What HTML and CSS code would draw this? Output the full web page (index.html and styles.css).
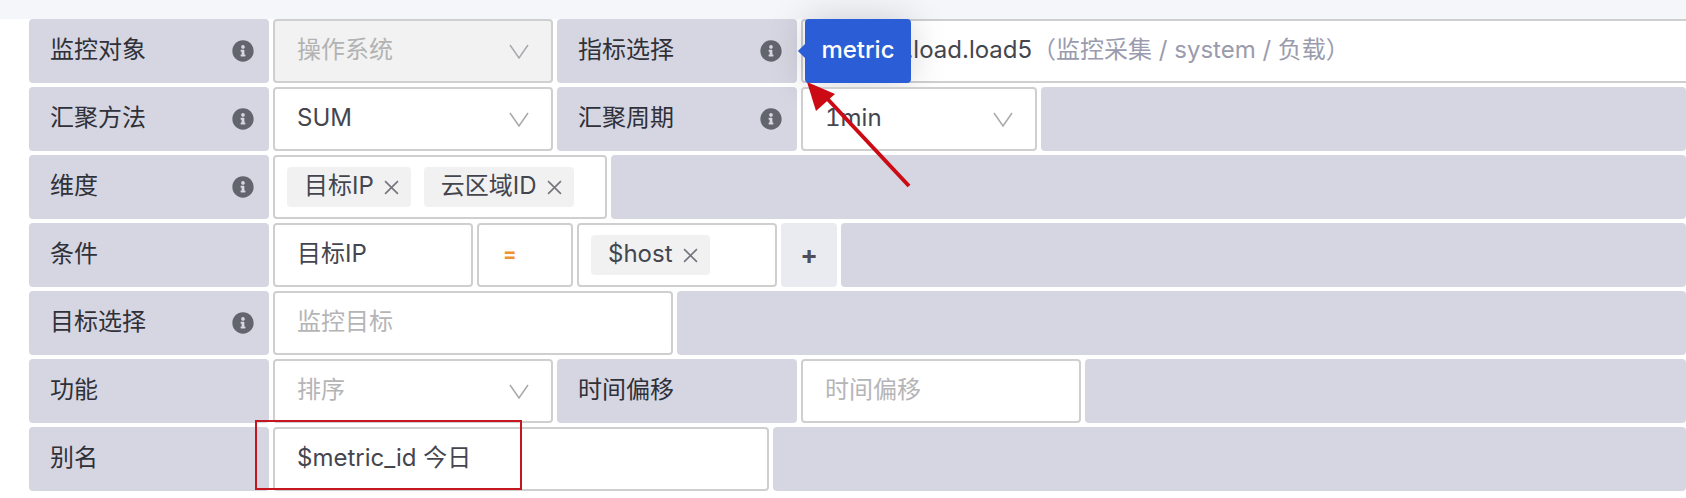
FILE: index.html
```html
<!DOCTYPE html>
<html lang="zh-CN">
<head>
<meta charset="utf-8">
<title>指标配置</title>
<link rel="stylesheet" href="styles.css">
</head>
<body>
<svg class="defs" width="0" height="0" aria-hidden="true">
  <symbol id="info" viewBox="0 0 512 512"><path d="M256 8C119.043 8 8 119.083 8 256c0 136.997 111.043 248 248 248s248-111.003 248-248C504 119.083 392.957 8 256 8zm0 110c23.196 0 42 18.804 42 42s-18.804 42-42 42-42-18.804-42-42 18.804-42 42-42zm56 254c0 6.627-5.373 12-12 12h-88c-6.627 0-12-5.373-12-12v-24c0-6.627 5.373-12 12-12h12v-64h-12c-6.627 0-12-5.373-12-12v-24c0-6.627 5.373-12 12-12h64c6.627 0 12 5.373 12 12v100h12c6.627 0 12 5.373 12 12v24z"/></symbol>
  <symbol id="chev" viewBox="0 0 20 15"><path d="M1 1l9 13 9-13" fill="none" stroke="currentColor" stroke-width="1.5"/></symbol>
  <symbol id="x" viewBox="0 0 14 14"><path d="M1 1l12 12M13 1L1 13" fill="none" stroke="currentColor" stroke-width="1.5"/></symbol>
</svg>
<div class="band"></div>
<main class="form">
  <div class="row">
    <div class="label"><span>监控对象</span><svg class="info"><use href="#info"/></svg></div>
    <div class="field select disabled w-280"><span>操作系统</span><svg class="chev"><use href="#chev"/></svg></div>
    <div class="label"><span>指标选择</span><svg class="info"><use href="#info"/></svg></div>
    <div class="field metric grow">
      <span class="metric-text">system.load.load5<span class="muted">（监控采集 / system / 负载）</span></span>
      <div class="tooltip">metric</div>
    </div>
  </div>
  <div class="row">
    <div class="label"><span>汇聚方法</span><svg class="info"><use href="#info"/></svg></div>
    <div class="field select w-280"><span>SUM</span><svg class="chev"><use href="#chev"/></svg></div>
    <div class="label"><span>汇聚周期</span><svg class="info"><use href="#info"/></svg></div>
    <div class="field select w-236"><span class="tabular">1min</span><svg class="chev"><use href="#chev"/></svg></div>
    <div class="filler"></div>
  </div>
  <div class="row">
    <div class="label"><span>维度</span><svg class="info"><use href="#info"/></svg></div>
    <div class="field tags w-334">
      <span class="tag"><span>目标IP</span><svg class="close"><use href="#x"/></svg></span>
      <span class="tag"><span>云区域ID</span><svg class="close"><use href="#x"/></svg></span>
    </div>
    <div class="filler"></div>
  </div>
  <div class="row">
    <div class="label"><span>条件</span></div>
    <div class="field w-200"><span>目标IP</span></div>
    <div class="field op w-96"><span>=</span></div>
    <div class="field tags w-200"><span class="tag"><span>$host</span><svg class="close"><use href="#x"/></svg></span></div>
    <div class="add">+</div>
    <div class="filler"></div>
  </div>
  <div class="row">
    <div class="label"><span>目标选择</span><svg class="info"><use href="#info"/></svg></div>
    <div class="field placeholder w-400"><span>监控目标</span></div>
    <div class="filler"></div>
  </div>
  <div class="row">
    <div class="label"><span>功能</span></div>
    <div class="field select placeholder w-280"><span>排序</span><svg class="chev"><use href="#chev"/></svg></div>
    <div class="label"><span>时间偏移</span></div>
    <div class="field placeholder w-280"><span>时间偏移</span></div>
    <div class="filler"></div>
  </div>
  <div class="row">
    <div class="label"><span>别名</span></div>
    <div class="field w-496"><span>$metric_id 今日</span></div>
    <div class="filler"></div>
  </div>
</main>
<svg class="pointer" viewBox="0 0 120 120" aria-hidden="true">
  <path class="pointer-line" d="M104 104L16 10"/>
  <path class="pointer-head" d="M2 0L30 12L11 29Z"/>
</svg>
<div class="callout"></div>
</body>
</html>
```

FILE: styles.css
```css
* { box-sizing: border-box; }
html, body { margin: 0; height: 100%; }
body {
  position: relative;
  overflow: hidden;
  background: #fff;
  color: #44464f;
  font-family: Inter, "Noto Sans CJK SC", sans-serif;
  font-size: 24px;
  line-height: 32px;
}
.defs { position: absolute; }
.band { height: 19px; background: #f5f6fa; }
.form {
  display: flex;
  flex-direction: column;
  gap: 4px;
  padding-left: 29px;
}
.row { display: flex; gap: 4px; height: 64px; }
.label {
  flex: 0 0 240px;
  display: flex;
  align-items: center;
  justify-content: space-between;
  padding: 0 15px 0 21px;
  border-radius: 4px;
  background: #d5d6e1;
  color: #2f3038;
}
.label > span, .field > span, .tag > span { margin-top: -2px; }
.info { width: 22px; height: 22px; fill: #63656e; }
.field {
  position: relative;
  flex: none;
  display: flex;
  align-items: center;
  padding: 0 22px;
  border: 2px solid #cfcfcf;
  border-radius: 4px;
  background: #fff;
}
.grow { flex: 1; margin-right: -10px; }
.w-96 { width: 96px; }
.w-200 { width: 200px; }
.w-236 { width: 236px; }
.w-280 { width: 280px; }
.w-334 { width: 334px; }
.w-400 { width: 400px; }
.w-496 { width: 496px; }
.select { justify-content: space-between; }
.tabular { font-variant-numeric: tabular-nums; }
.chev { width: 20px; height: 15px; color: #a9a9ad; }
.disabled { background: #f2f2f2; color: #b3b3b3; }
.placeholder { color: #b5b5b8; }
.tags { gap: 13px; padding: 0 12px; }
.field > .tag { margin-top: 0; }
.tag {
  display: flex;
  align-items: center;
  gap: 10px;
  height: 40px;
  padding: 0 12px 0 17px;
  border-radius: 4px;
  background: #f1f1f2;
}
.close { width: 15px; height: 15px; color: #74757c; }
.op { color: #f0922e; font-size: 20px; font-weight: 700; padding-left: 24px; }
.add {
  flex: 0 0 56px;
  display: flex;
  align-items: center;
  justify-content: center;
  border-radius: 4px;
  background: #eaebf1;
  color: #4c4e5c;
  font-size: 26px;
  font-weight: 700;
}
.filler { flex: 1; border-radius: 4px; background: #d5d6e1; }
.muted { color: #9a9bad; }
.metric-text { white-space: nowrap; }
.tooltip {
  position: absolute;
  left: 2px;
  top: -2px;
  display: flex;
  align-items: center;
  justify-content: center;
  width: 106px;
  height: 64px;
  padding-bottom: 3px;
  border-radius: 4px;
  background: #2b5dd6;
  color: #fff;
  font-size: 24px;
  font-weight: 500;
  box-shadow: 0 0 36px rgba(0, 0, 0, .17);
}
.tooltip::before {
  content: "";
  position: absolute;
  left: -5px;
  top: 27px;
  width: 10px;
  height: 10px;
  background: #2b5dd6;
  transform: rotate(45deg);
}
.pointer {
  position: absolute;
  left: 805px;
  top: 82px;
  width: 120px;
  height: 120px;
  overflow: visible;
}
.pointer-line { stroke: #cc0a14; stroke-width: 4; fill: none; }
.pointer-head { fill: #cc0a14; }
.callout {
  position: absolute;
  left: 255px;
  top: 420px;
  width: 267px;
  height: 70px;
  border: 2px solid #c4161f;
}
```
